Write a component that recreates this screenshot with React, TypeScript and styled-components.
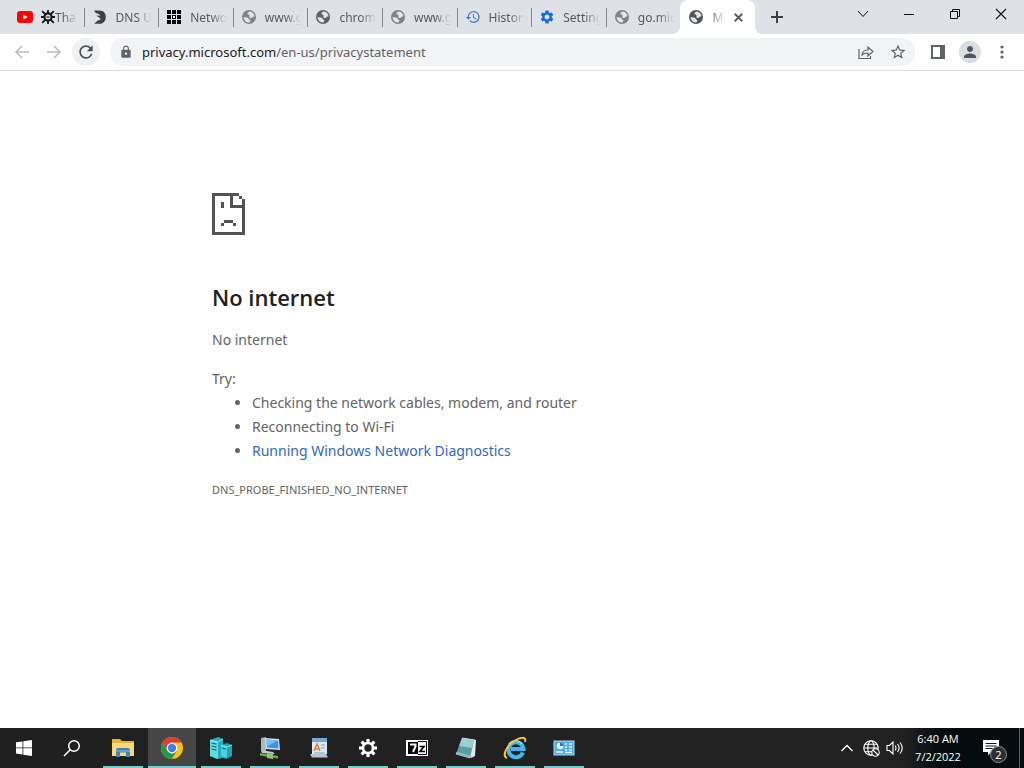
import React from "react";
import styled, { createGlobalStyle, css } from "styled-components";
import { MdHistory, MdSettings, MdLock, MdStarBorder, MdPerson, MdRefresh } from "react-icons/md";

const GlobalStyle = createGlobalStyle`
  *, *::before, *::after { box-sizing: border-box; }
  body {
    margin: 0;
    background: #fff;
    font-family: "Noto Sans", "Open Sans", sans-serif;
    color: #5f6368;
  }
  button { font: inherit; color: inherit; border: 0; padding: 0; background: none; }
  svg { display: block; flex: none; }
`;

const Screen = styled.div`
  min-height: 100vh;
  display: flex;
  flex-direction: column;
`;

/* Tab strip */

const TabStrip = styled.header`
  display: flex;
  height: 34px;
  padding-left: 9px;
  background: #dee1e6;
`;

const Tabs = styled.div`
  display: grid;
  grid-template-columns: repeat(10, minmax(0, 1fr));
  flex: 0 1 746px;
  min-width: 0;
`;

const Tab = styled.button<{ $active?: boolean }>`
  position: relative;
  min-width: 0;
  display: flex;
  align-items: center;
  gap: 8px;
  padding: 0 ${(p) => (p.$active ? "12px" : "6px")} 0 8px;
  text-align: left;
  font-size: 12px;
  color: #55595e;
  ${(p) =>
    p.$active
      ? css`
          background: #fff;
          border-radius: 8px 8px 0 0;
          &::before,
          &::after {
            content: "";
            position: absolute;
            bottom: 0;
            width: 8px;
            height: 8px;
          }
          &::before {
            left: -8px;
            background: radial-gradient(circle at 0 0, transparent 8px, #fff 8px);
          }
          &::after {
            right: -8px;
            background: radial-gradient(circle at 100% 0, transparent 8px, #fff 8px);
          }
        `
      : css`
          &:not(:nth-last-child(2))::after {
            content: "";
            position: absolute;
            right: -1px;
            top: 8px;
            width: 1px;
            height: 19px;
            background: #85888d;
          }
        `}
`;

const TabTitle = styled.span`
  flex: 1;
  min-width: 0;
  display: flex;
  align-items: center;
  overflow: hidden;
  white-space: nowrap;
  mask-image: linear-gradient(to right, #000 calc(100% - 16px), transparent);
`;

const NewTab = styled.button`
  width: 28px;
  margin-left: 8px;
  display: grid;
  place-items: center;
  color: #3c4043;
`;

const WindowControls = styled.div`
  display: flex;
  height: 28px;
  margin-left: auto;
`;

const WindowButton = styled.button`
  width: 46px;
  display: grid;
  place-items: center;
  color: #111;
`;

/* Toolbar */

const Toolbar = styled.nav`
  display: flex;
  align-items: center;
  gap: 4px;
  height: 37px;
  padding: 0 8px;
  background: #fff;
  border-bottom: 1px solid #dcdde0;
`;

const ToolButton = styled.button<{ $tone?: string; $fill?: string }>`
  width: 28px;
  height: 28px;
  flex: none;
  display: grid;
  place-items: center;
  border-radius: 50%;
  color: ${(p) => p.$tone ?? "#5f6368"};
  background: ${(p) => p.$fill ?? "transparent"};
`;

const Omnibox = styled.div`
  flex: 1;
  min-width: 0;
  display: flex;
  align-items: center;
  gap: 4px;
  height: 28px;
  margin: 0 5px 0 6px;
  padding: 0 3px 0 8px;
  border-radius: 14px;
  background: #f1f3f4;
`;

const Address = styled.a`
  flex: 1;
  min-width: 0;
  padding-left: 4px;
  overflow: hidden;
  white-space: nowrap;
  font-size: 13px;
  line-height: 20px;
  color: #5f6368;
  text-decoration: none;
  b {
    font-weight: 400;
    color: #202124;
  }
`;

const LockSlot = styled.span`
  width: 16px;
  display: grid;
  place-items: center;
`;

const Avatar = styled.span`
  width: 22px;
  height: 22px;
  display: grid;
  place-items: center;
  border-radius: 50%;
  background: #dadde1;
`;

/* Error page */

const Page = styled.main`
  flex: 1;
  width: 100%;
  max-width: 600px;
  margin: 0 auto;
  padding: 122px 0 40px;
  font-size: 14px;
  line-height: 24px;
  color: #646464;
`;

const Title = styled.h1`
  margin: 46px 0 0;
  font-family: "Open Sans", "Noto Sans", sans-serif;
  font-size: 22px;
  line-height: 32px;
  font-weight: 600;
  color: #202124;
`;

const Summary = styled.p`
  margin: 15px 0;
`;

const Suggestions = styled.ul`
  margin: 0;
  padding-left: 40px;
`;

const DiagnosticsLink = styled.a`
  color: #3367c5;
  text-decoration: none;
`;

const ErrorCode = styled.p`
  margin: 15px 0 0;
  font-size: 11px;
`;

/* Taskbar */

const Taskbar = styled.footer`
  display: flex;
  height: 40px;
  background: linear-gradient(to right, #202020, #222 88%, #040c10 92%);
  color: #fff;
`;

const Apps = styled.div`
  display: flex;
  gap: 1px;
  margin-left: 3px;
`;

const TaskButton = styled.button<{ $state?: "open" | "active" }>`
  position: relative;
  width: 48px;
  height: 40px;
  display: grid;
  place-items: center;
  background: ${(p) => (p.$state === "active" ? "#464646" : "transparent")};
  &::after {
    content: "";
    display: ${(p) => (p.$state ? "block" : "none")};
    position: absolute;
    bottom: 0;
    left: ${(p) => (p.$state === "active" ? "0" : "4px")};
    right: ${(p) => (p.$state === "active" ? "0" : "4px")};
    height: 2px;
    background: #76cdd0;
  }
`;

const Tray = styled.div`
  display: flex;
  align-items: center;
  margin-left: auto;
`;

const TrayButton = styled.button`
  width: 24px;
  height: 40px;
  display: grid;
  place-items: center;
`;

const Clock = styled.time`
  width: 62px;
  font-family: "Open Sans", "Noto Sans", sans-serif;
  font-size: 11px;
  line-height: 18px;
  text-align: center;
  white-space: nowrap;
`;

const Notifications = styled.button`
  position: relative;
  width: 50px;
  height: 40px;
  padding-right: 6px;
  display: grid;
  place-items: center;
`;

const Badge = styled.span`
  position: absolute;
  left: 21px;
  top: 18px;
  width: 17px;
  height: 17px;
  border: 1px solid #8a9093;
  border-radius: 50%;
  background: #2a3033;
  font-size: 11px;
  line-height: 15px;
  text-align: center;
`;

const ShowDesktop = styled.button`
  width: 5px;
  height: 40px;
  border-left: 1px solid #596064;
`;

/* Icons */

const Globe = ({ color = "#5f6368" }: { color?: string }) => (
  <svg width="16" height="16" viewBox="0 0 16 16">
    <circle cx="8" cy="8" r="7" fill={color} />
    <path
      fill="#e3e5e8"
      d="M8.4 2.4C7 3.2 6.300 3.900 6.500 4.800c.2 1 1.700.6 2 1.700.2.900-.4 1.500.3 2.200.8.700 2.200.1 2.800-.7.500-.7 1.100-.6 1.900-.4A5.600 5.600 0 0 0 8.400 2.400zM2.500 8.300c1.600-.3 3.600-.2 4.600.6.8.7.6 1.500 1.500 1.800.9.300 1 1 .5 1.500-.4.500-.5.900-.6 1.400A5.600 5.600 0 0 1 2.500 8.300z"
    />
  </svg>
);

const YouTube = () => (
  <svg width="16" height="16" viewBox="0 0 16 16">
    <rect x="0" y="2" width="16" height="12" rx="3" fill="#f00" />
    <path d="M6.400 5.500v5l4.200-2.500z" fill="#fff" />
  </svg>
);

const Emblem = () => (
  <svg width="14" height="14" viewBox="0 0 14 14" fill="none" stroke="#16181a">
    <circle cx="7" cy="7" r="3.600" strokeWidth="2.200" />
    <path d="M7 0v3.500M7 10.500V14M0 7h3.500M10.500 7H14M1.200 1.200L4.500 4.500M12.800 1.200L9.500 4.500M1.200 12.800L4.500 9.500M12.800 12.800L9.500 9.500" strokeWidth="1.800" />
    <path d="M5.500 7h3" strokeWidth="1.200" />
  </svg>
);

const DnsLogo = () => (
  <svg width="16" height="16" viewBox="0 0 16 16">
    <path d="M2 1.500h5.500c4 0 6.300 2.800 6.300 6.400 0 4-2.700 6.900-6.700 6.900H2.200l3.400-3.200c2.200 0 2.800-.9 2.900-2L4.200 6.600l4.300.2C7.400 5.200 6 4.400 3.800 4z" fill="#3f4245" />
  </svg>
);

const GridLogo = () => (
  <svg width="16" height="16" viewBox="0 0 16 16" fill="#050505">
    {[1, 6, 11].map((y) => [1, 6, 11].map((x) => <rect key={`${x}-${y}`} x={x} y={y} width="4" height="4" />))}
    <rect x="7" y="7" width="2" height="2" fill="#fff" />
  </svg>
);

const Close = ({ size, weight }: { size: number; weight: number }) => (
  <svg width={size} height={size} viewBox="0 0 12 12" stroke="currentColor" strokeWidth={weight} fill="none">
    <path d="M1 1l10 10M11 1L1 11" />
  </svg>
);

const Arrow = ({ flip }: { flip?: boolean }) => (
  <svg width="16" height="16" viewBox="0 0 16 16" fill="none" stroke="currentColor" strokeWidth="1.600">
    <path d={flip ? "M1 8h13M8 2l6 6-6 6" : "M15 8H2M8 2L2 8l6 6"} />
  </svg>
);

const SadPage = () => (
  <svg width="33" height="42" viewBox="0 0 11 14" fill="#535353" shapeRendering="crispEdges">
    <path d="M0 0h9v1H7v3h3V2h1v12H0zM1 1v12h9V5H6V1z" fillRule="evenodd" />
    <path d="M9 1h1v1H9zM3 3h1v2H3zM4 9h3v1H4zM3 10h1v1H3zM7 10h1v1H7z" />
  </svg>
);

const WindowsLogo = () => (
  <svg width="16" height="16" viewBox="0 0 16 16" fill="#fff">
    <path d="M0 2.300l6.500-.9v6.100H0zM7.300 1.300L16 0v7.500H7.300zM0 8.300h6.500v6.200L0 13.600zM7.300 8.300H16V16l-8.700-1.300z" />
  </svg>
);

const Search = () => (
  <svg width="18" height="18" viewBox="0 0 18 18" fill="none" stroke="#fff" strokeWidth="1.500">
    <circle cx="11" cy="7" r="5.300" />
    <path d="M7.200 10.800L1 17" />
  </svg>
);

const Folder = () => (
  <svg width="24" height="20" viewBox="0 0 24 20">
    <path d="M1 1h8l2 2h12v15H1z" fill="#e8b33d" />
    <path d="M1 5h22v13H1z" fill="#fbd976" />
    <path d="M5 19v-7.500l1.500-1.500h11l1.500 1.500V19h-4v-4.500H9V19z" fill="#3f83b8" />
    <path d="M5 12h14v2H5z" fill="#5ba5d6" />
  </svg>
);

const ChromeLogo = () => (
  <svg width="24" height="24" viewBox="0 0 24 24">
    <circle cx="12" cy="12" r="11" fill="#fbc116" />
    <path d="M2.470 6.500A11 11 0 0 1 21.530 6.500H12L7.240 14.750z" fill="#e33b2e" />
    <path d="M2.470 6.500A11 11 0 0 0 12 23l4.760-8.250L12 17.500l-4.760-2.750z" fill="#229a4b" />
    <circle cx="12" cy="12" r="5.400" fill="#fff" />
    <circle cx="12" cy="12" r="4.200" fill="#4280ef" />
  </svg>
);

const Servers = () => (
  <svg width="24" height="24" viewBox="0 0 24 24">
    <path d="M1 4l8-3 5 2v19l-6 1-7-3z" fill="#22aebb" />
    <path d="M1 4l8 2v17l-8-3z" fill="#65dce3" />
    <path d="M12 9l6-2 5 2v11l-6 3-5-2z" fill="#1ba7b5" />
    <path d="M12 9l6 2v11l-6-2z" fill="#50d1da" />
    <path d="M2.500 7l5 1.200M2.500 10l5 1.200M2.500 13l5 1.200M13 12l4 1" stroke="#0d6f80" strokeWidth="1.200" />
    <path d="M12 9l6 2 5-2M1 4l8 2 5-3" stroke="#b8f6f7" strokeWidth=".7" fill="none" />
  </svg>
);

const NetworkPc = () => (
  <svg width="24" height="24" viewBox="0 0 24 24">
    <path d="M3 2l5-1v15l-5-1z" fill="#aeb8bc" />
    <path d="M7 2l14 1 1 11-14-1z" fill="#d5e1e8" />
    <path d="M8.500 3.500l11.500 1 .6 8-11.600-1z" fill="#3d95df" />
    <path d="M8.500 3.500l11.500 1-11.300 6z" fill="#79bef1" />
    <path d="M3 14l12 2 2 2-13-1z" fill="#c3cacb" />
    <path d="M2 17l18 3v2.500l-18-3z" fill="#69a953" />
    <path d="M9 17l6 1v5l-6-1z" fill="#8cc974" />
  </svg>
);

const Wordpad = () => (
  <svg width="22" height="22" viewBox="0 0 22 22">
    <path d="M4 1h15v16H4z" fill="#dbe9f6" />
    <path d="M4 1h15v4H4z" fill="#75a8d5" />
    <path d="M2 17h16l2 3.500H4z" fill="#b5c6d6" />
    <path d="M6 14l3-7 3 7M7 12h4" stroke="#df8138" strokeWidth="1.600" fill="none" />
    <path d="M13 8h4M13 11h4M6 16h11" stroke="#7f9fbc" />
  </svg>
);

const Gear = () => (
  <svg width="20" height="20" viewBox="0 0 20 20" fill="none" stroke="#fff">
    <circle cx="10" cy="10" r="5" strokeWidth="2.600" />
    {[0, 45, 90, 135, 180, 225, 270, 315].map((a) => (
      <path key={a} d="M10 1v3.500" strokeWidth="3.200" transform={`rotate(${a} 10 10)`} />
    ))}
  </svg>
);

const SevenZip = () => (
  <svg width="22" height="16" viewBox="0 0 22 16">
    <path d="M0 0h22v16H0z" fill="#fff" />
    <path d="M2 2h10v12H2z" fill="#000" />
    <path d="M12 1.500h8.500v13H12" fill="none" stroke="#000" />
    <path d="M4 4.500h5.500v2L7 12" stroke="#fff" strokeWidth="2" fill="none" />
    <path d="M13.500 6.500h4.500L14 11.500h5" stroke="#000" strokeWidth="1.600" fill="none" />
  </svg>
);

const Notepad = () => (
  <svg width="24" height="24" viewBox="0 0 24 24">
    <path d="M9 2l13 2-1 16-4 2z" fill="#e4e9e8" />
    <path d="M8 2l12 2-4 18-14-4z" fill="#5b9ea5" />
    <path d="M8 2l12 2-2 8-13-2z" fill="#9bcdd1" />
    <path d="M2 18l14 4 .3-1.500-13.600-4zM8 2l13 2" stroke="#cbdedf" strokeWidth=".8" fill="none" />
  </svg>
);

const Explorer = () => (
  <svg width="24" height="24" viewBox="0 0 24 24" fill="none">
    <path d="M20 16.500A7.500 7.500 0 1 1 20.500 13H8" stroke="#45b5ee" strokeWidth="4" />
    <path d="M19 8A8 8 0 0 0 6 8" stroke="#a5e2fb" strokeWidth="1.300" />
    <path d="M4 22C-1 20 3 11 10 6c6-5 14-6 12 0" stroke="#f1c92f" strokeWidth="2" />
  </svg>
);

const ControlPanel = () => (
  <svg width="22" height="18" viewBox="0 0 22 18">
    <rect x="1" y="2" width="20" height="14" fill="#4faee6" stroke="#a8dcf7" />
    <circle cx="7" cy="7" r="3.300" fill="#e5f4fb" />
    <path d="M7 7V3.700A3.300 3.300 0 0 1 10.300 7z" fill="#2670bb" />
    <path d="M12 5h2M16 5h3M12 8h2M16 8h3M12 11h2M16 11h3M3 13h7M12 13.500h7" stroke="#dff3fd" strokeWidth="1.500" />
  </svg>
);

const tabs = [
  { label: "Tha", icon: <YouTube />, emblem: true },
  { label: "DNS U", icon: <DnsLogo /> },
  { label: "Netwo", icon: <GridLogo /> },
  { label: "www.g", icon: <Globe color="#808387" /> },
  { label: "chrom", icon: <Globe /> },
  { label: "www.g", icon: <Globe color="#808387" /> },
  { label: "History", icon: <MdHistory size={16} color="#4278cf" /> },
  { label: "Setting", icon: <MdSettings size={16} color="#1a69dc" /> },
  { label: "go.mic", icon: <Globe color="#808387" /> },
];

const apps: { name: string; icon: React.ReactNode; active?: boolean }[] = [
  { name: "File Explorer", icon: <Folder /> },
  { name: "Google Chrome", icon: <ChromeLogo />, active: true },
  { name: "Server Manager", icon: <Servers /> },
  { name: "Network", icon: <NetworkPc /> },
  { name: "WordPad", icon: <Wordpad /> },
  { name: "Settings", icon: <Gear /> },
  { name: "7-Zip", icon: <SevenZip /> },
  { name: "Notepad", icon: <Notepad /> },
  { name: "Internet Explorer", icon: <Explorer /> },
  { name: "Control Panel", icon: <ControlPanel /> },
];

export default function App() {
  return (
    <Screen>
      <GlobalStyle />
      <TabStrip>
        <Tabs>
          {tabs.map((tab, i) => (
            <Tab key={i}>
              {tab.icon}
              <TabTitle>
                {tab.emblem && <Emblem />}
                {tab.label}
              </TabTitle>
            </Tab>
          ))}
          <Tab $active>
            <Globe color="#505458" />
            <TabTitle>Mi</TabTitle>
            <Close size={9} weight={2.4} />
          </Tab>
        </Tabs>
        <NewTab aria-label="New tab">
          <svg width="12" height="12" viewBox="0 0 12 12" stroke="currentColor" strokeWidth="2">
            <path d="M6 0v12M0 6h12" />
          </svg>
        </NewTab>
        <WindowControls>
          <WindowButton aria-label="Search tabs">
            <svg width="12" height="12" viewBox="0 0 12 12" fill="none" stroke="currentColor">
              <path d="M1 3l5 5.500L11 3" />
            </svg>
          </WindowButton>
          <WindowButton aria-label="Minimize">
            <svg width="10" height="10" viewBox="0 0 10 10" stroke="currentColor">
              <path d="M0 5.500h10" />
            </svg>
          </WindowButton>
          <WindowButton aria-label="Restore">
            <svg width="10" height="10" viewBox="0 0 10 10" fill="none" stroke="currentColor">
              <path d="M.5 2.500h7v7h-7zM2.500 2.500v-2h7v7h-2" />
            </svg>
          </WindowButton>
          <WindowButton aria-label="Close">
            <Close size={12} weight={1.1} />
          </WindowButton>
        </WindowControls>
      </TabStrip>

      <Toolbar>
        <ToolButton aria-label="Back" $tone="#babcbe">
          <Arrow />
        </ToolButton>
        <ToolButton aria-label="Forward" $tone="#babcbe">
          <Arrow flip />
        </ToolButton>
        <ToolButton aria-label="Reload" $fill="#eff0f1" $tone="#4b4f53">
          <MdRefresh size={20} />
        </ToolButton>
        <Omnibox>
          <LockSlot>
            <MdLock size={14} />
          </LockSlot>
          <Address href="#">
            <b>privacy.microsoft.com</b>/en-us/privacystatement
          </Address>
          <ToolButton aria-label="Share">
            <svg width="16" height="16" viewBox="0 0 16 16" fill="none" stroke="currentColor" strokeWidth="1.200">
              <path d="M1 5v9.500h11.500V12M4 11c.3-3.300 2.500-5 6-5V3l5 4.500-5 4.500V9C7.300 9 5.500 9.500 4 11z" />
            </svg>
          </ToolButton>
          <ToolButton aria-label="Bookmark">
            <MdStarBorder size={18} />
          </ToolButton>
        </Omnibox>
        <ToolButton aria-label="Side panel">
          <svg width="14" height="14" viewBox="0 0 14 14" fill="currentColor">
            <path fillRule="evenodd" d="M0 0h14v14H0zM2 2v10h7V2z" />
          </svg>
        </ToolButton>
        <ToolButton aria-label="Profile">
          <Avatar>
            <MdPerson size={18} color="#4d5761" />
          </Avatar>
        </ToolButton>
        <ToolButton aria-label="Menu">
          <svg width="4" height="14" viewBox="0 0 4 14" fill="currentColor">
            <circle cx="2" cy="2" r="1.600" />
            <circle cx="2" cy="7" r="1.600" />
            <circle cx="2" cy="12" r="1.600" />
          </svg>
        </ToolButton>
      </Toolbar>

      <Page>
        <SadPage />
        <Title>No internet</Title>
        <Summary>No internet</Summary>
        <div>Try:</div>
        <Suggestions>
          <li>Checking the network cables, modem, and router</li>
          <li>Reconnecting to Wi-Fi</li>
          <li>
            <DiagnosticsLink href="#">Running Windows Network Diagnostics</DiagnosticsLink>
          </li>
        </Suggestions>
        <ErrorCode>DNS_PROBE_FINISHED_NO_INTERNET</ErrorCode>
      </Page>

      <Taskbar>
        <TaskButton aria-label="Start">
          <WindowsLogo />
        </TaskButton>
        <TaskButton aria-label="Search">
          <Search />
        </TaskButton>
        <Apps>
          {apps.map((app) => (
            <TaskButton key={app.name} aria-label={app.name} $state={app.active ? "active" : "open"}>
              {app.icon}
            </TaskButton>
          ))}
        </Apps>
        <Tray>
          <TrayButton aria-label="Show hidden icons">
            <svg width="12" height="12" viewBox="0 0 12 12" fill="none" stroke="#fff" strokeWidth="1.300">
              <path d="M.5 9L6 3.500 11.500 9" />
            </svg>
          </TrayButton>
          <TrayButton aria-label="Network status">
            <svg width="17" height="17" viewBox="0 0 17 17" fill="none" stroke="#fff" strokeWidth="1.100">
              <circle cx="8" cy="8" r="7.200" />
              <ellipse cx="8" cy="8" rx="3.200" ry="7.200" />
              <path d="M.8 8h14.400M2 4.300h12M2 11.700h7" />
              <circle cx="12.500" cy="12.500" r="3.700" fill="#222" />
              <path d="M10 10l5 5" />
            </svg>
          </TrayButton>
          <TrayButton aria-label="Volume">
            <svg width="18" height="16" viewBox="0 0 18 16" fill="none" stroke="#fff" strokeWidth="1.100">
              <path d="M1 5.500h2.500L7 2v12l-3.500-3.500H1zM9 5.500q2 2.500 0 5M11.500 4q3.200 4 0 8M14 2.500q4.500 5.500 0 11" />
            </svg>
          </TrayButton>
          <Clock>
            6:40 AM
            <br />
            7/2/2022
          </Clock>
          <Notifications aria-label="Notifications">
            <svg width="16" height="16" viewBox="0 0 16 16">
              <path d="M0 0h16v12H8l-3 3.500V12H0z" fill="#fff" />
              <path d="M2.500 3.500h11M2.500 6h11M2.500 8.500h7" stroke="#11181b" />
            </svg>
            <Badge>2</Badge>
          </Notifications>
          <ShowDesktop aria-label="Show desktop" />
        </Tray>
      </Taskbar>
    </Screen>
  );
}
